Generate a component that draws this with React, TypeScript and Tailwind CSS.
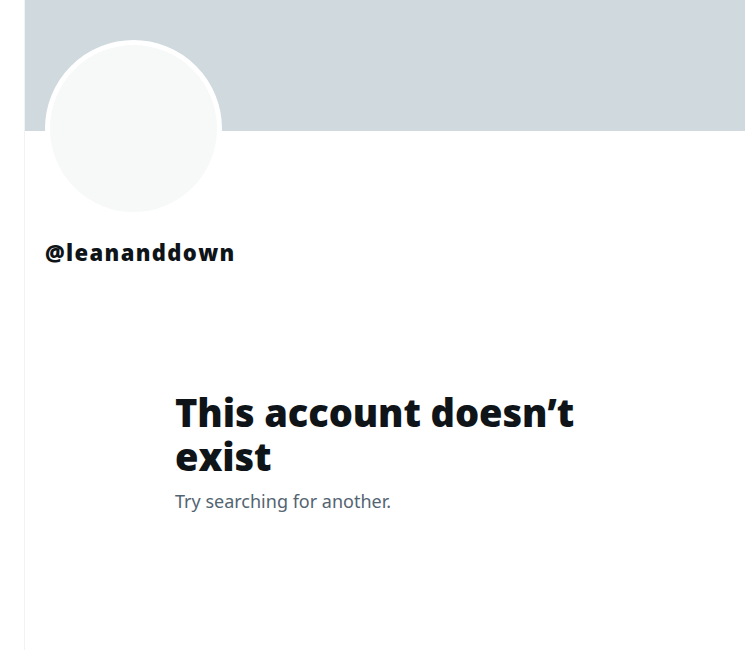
export default function App() {
  return (
    <div
      className="flex w-full min-h-[650px] bg-white"
      style={{ fontFamily: '"Open Sans", "Noto Sans", sans-serif' }}
    >
      <div className="w-[24px] shrink-0" />
      <div className="flex-1 min-w-0 border-l border-[#eff3f4] flex flex-col">
        <div className="h-[131px] bg-[#cfd9de]" />
        <div className="ml-[20px] mt-[-91px] w-[177px] h-[177px] rounded-full border-[5px] border-white bg-[#f7f9f9]" />
        <div className="ml-[20px] mt-[22px] text-[22px] leading-[26px] font-extrabold tracking-[1.35px] text-[#0f1419]">
          @leananddown
        </div>
        <div className="ml-[150px] mt-[125px] w-[420px] flex flex-col">
          <h1 className="text-[38px] leading-[44px] font-extrabold text-[#0f1419] tracking-[-0.1px]">
            This account doesn’t exist
          </h1>
          <p
            className="mt-[11px] text-[18px] leading-[24px] text-[#536471]"
            style={{ fontFamily: '"Noto Sans", "Open Sans", sans-serif' }}
          >
            Try searching for another.
          </p>
        </div>
      </div>
    </div>
  );
}
